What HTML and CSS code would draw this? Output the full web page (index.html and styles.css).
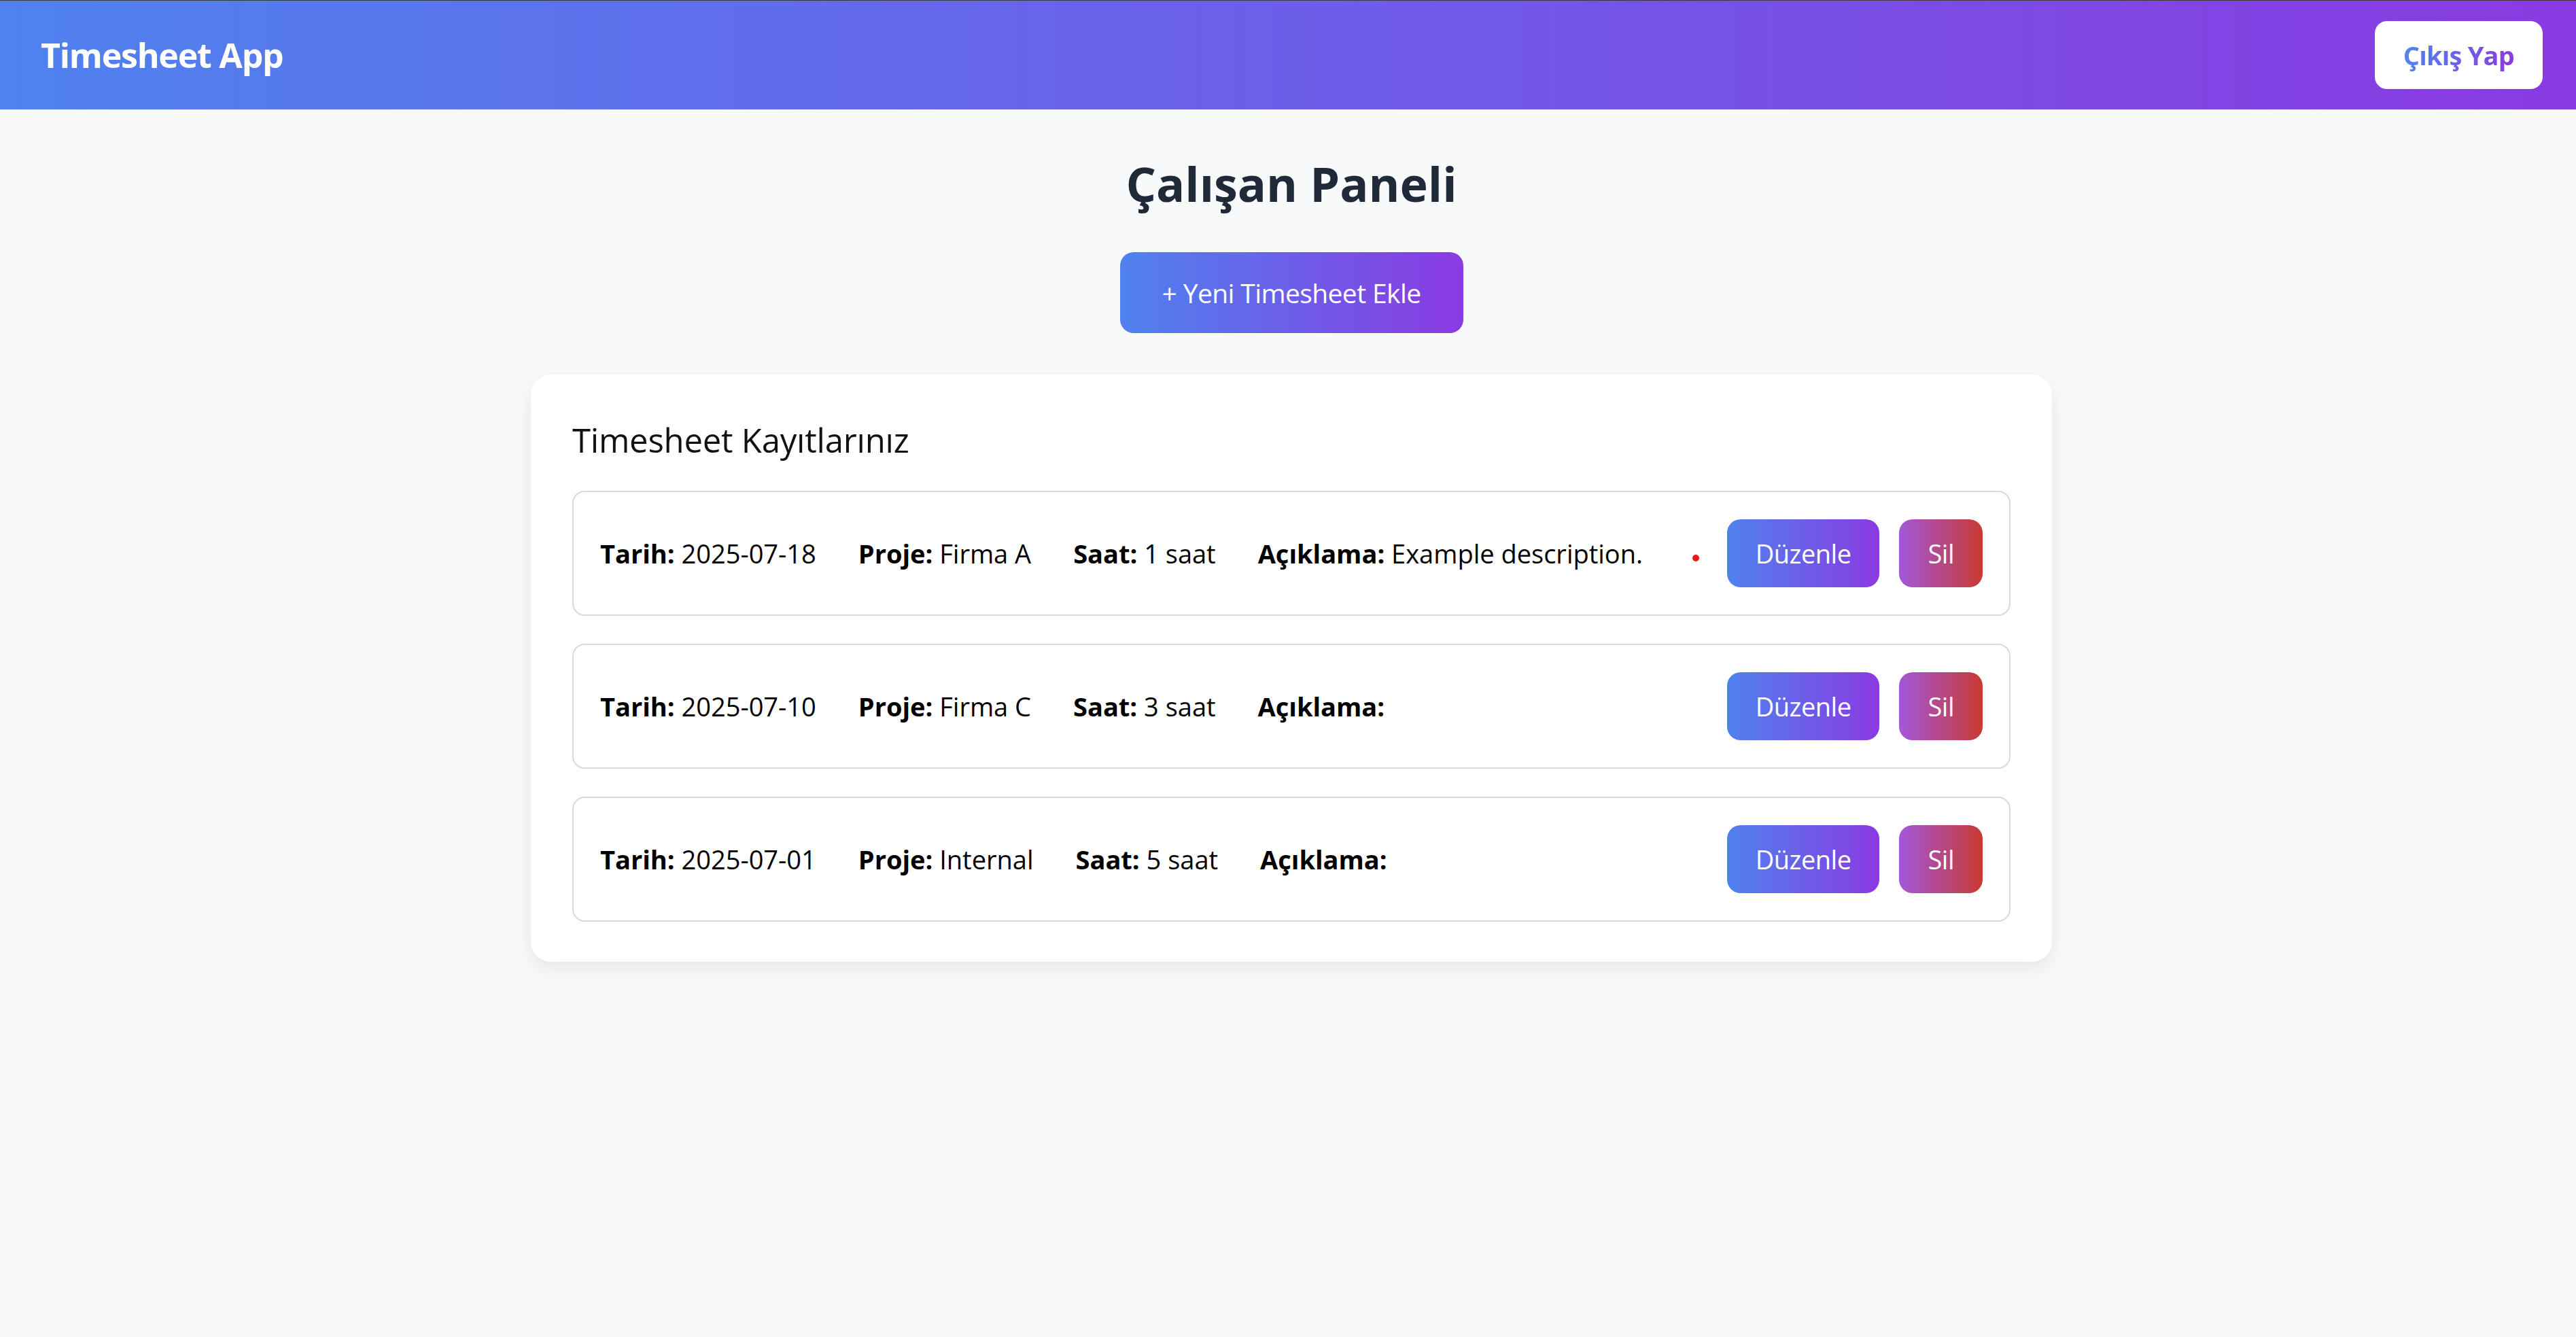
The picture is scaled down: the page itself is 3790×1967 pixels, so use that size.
FILE: index.html
```html
<!DOCTYPE html>
<html lang="tr">
<head>
<meta charset="utf-8">
<title>Timesheet App</title>
<link rel="stylesheet" href="styles.css">
</head>
<body>
<header class="topbar">
  <div class="brand">Timesheet App</div>
  <button class="logout" type="button"><span class="logout-text">Çıkış Yap</span></button>
</header>
<main class="main">
  <h1 class="page-title">Çalışan Paneli</h1>
  <button class="add-btn" type="button">+ Yeni Timesheet Ekle</button>
  <section class="card">
    <h2 class="card-title">Timesheet Kayıtlarınız</h2>
    <ul class="entries">
      <li class="entry">
        <div class="entry-info">
          <span class="field"><strong>Tarih:</strong> 2025-07-18</span>
          <span class="field"><strong>Proje:</strong> Firma A</span>
          <span class="field"><strong>Saat:</strong> 1 saat</span>
          <span class="field"><strong>Açıklama:</strong> Example description.</span>
        </div>
        <div class="entry-actions">
          <span class="dot"></span>
          <button class="btn btn-edit" type="button">Düzenle</button>
          <button class="btn btn-delete" type="button">Sil</button>
        </div>
      </li>
      <li class="entry">
        <div class="entry-info">
          <span class="field"><strong>Tarih:</strong> 2025-07-10</span>
          <span class="field"><strong>Proje:</strong> Firma C</span>
          <span class="field"><strong>Saat:</strong> 3 saat</span>
          <span class="field"><strong>Açıklama:</strong></span>
        </div>
        <div class="entry-actions">
          <button class="btn btn-edit" type="button">Düzenle</button>
          <button class="btn btn-delete" type="button">Sil</button>
        </div>
      </li>
      <li class="entry">
        <div class="entry-info">
          <span class="field"><strong>Tarih:</strong> 2025-07-01</span>
          <span class="field"><strong>Proje:</strong> Internal</span>
          <span class="field"><strong>Saat:</strong> 5 saat</span>
          <span class="field"><strong>Açıklama:</strong></span>
        </div>
        <div class="entry-actions">
          <button class="btn btn-edit" type="button">Düzenle</button>
          <button class="btn btn-delete" type="button">Sil</button>
        </div>
      </li>
    </ul>
  </section>
</main>
</body>
</html>
```

FILE: styles.css
```css
* {
  box-sizing: border-box;
}

body {
  margin: 0;
  background: #f8f9fb;
  font-family: "Open Sans", "Noto Sans", sans-serif;
  color: #000;
}

.topbar {
  height: 161px;
  border-top: 1px solid #3c3c3c;
  background: linear-gradient(90deg, #4f82ee 0%, #8a3ae2 100%);
  display: flex;
  align-items: center;
  justify-content: space-between;
  padding: 0 49px 0 60px;
}

.brand {
  color: #fff;
  font-weight: 700;
  font-size: 50px;
  letter-spacing: -1.2px;
  line-height: 1;
}

.logout {
  height: 100px;
  padding: 0 42px;
  border: none;
  border-radius: 18px;
  background: #fff;
  font-family: inherit;
  font-size: 38px;
  font-weight: 700;
  letter-spacing: -0.8px;
}

.logout-text {
  background: linear-gradient(90deg, #4f86f0 0%, #8a3ae2 100%);
  -webkit-background-clip: text;
  background-clip: text;
  color: transparent;
}

.main {
  display: flex;
  flex-direction: column;
  align-items: center;
  padding: 66px 0 60px 10px;
}

.page-title {
  margin: 0;
  font-size: 70px;
  line-height: 86px;
  font-weight: 700;
  color: #1f2937;
}

.add-btn {
  margin-top: 58px;
  height: 119px;
  padding: 0 62px;
  border: none;
  border-radius: 20px;
  background: linear-gradient(90deg, #4f82ee 0%, #8a3ae2 100%);
  color: #fff;
  font-family: inherit;
  font-size: 39px;
  letter-spacing: -0.6px;
}

.card {
  margin-top: 61px;
  width: 2238px;
  padding: 61px 61px 59px;
  background: #fff;
  border-radius: 30px;
  box-shadow: 0 10px 28px rgba(0, 0, 0, 0.08);
}

.card-title {
  margin: 4px 0 44px;
  font-size: 49px;
  letter-spacing: -0.2px;
  line-height: 62px;
  font-weight: 500;
  color: #111;
}

.entries {
  list-style: none;
  margin: 0;
  padding: 0;
  display: flex;
  flex-direction: column;
  gap: 41px;
}

.entry {
  display: flex;
  align-items: center;
  justify-content: space-between;
  padding: 40px 39px;
  border: 2px solid #d6d9de;
  border-radius: 18px;
}

.entry-info {
  display: flex;
  gap: 62px;
  font-size: 38px;
  letter-spacing: 0;
  color: #000;
}

.entry-info strong {
  font-weight: 700;
}

.entry-actions {
  display: flex;
  align-items: center;
  gap: 29px;
}

.dot {
  width: 10px;
  height: 10px;
  margin: 14px 12px 0 0;
  border-radius: 50%;
  background: #e41c1c;
}

.btn {
  height: 100px;
  padding: 0 42px;
  border: none;
  border-radius: 20px;
  color: #fff;
  font-family: inherit;
  font-size: 38px;
  letter-spacing: -0.5px;
}

.btn-edit {
  background: linear-gradient(90deg, #4f82ee 0%, #8a3ae2 100%);
}

.btn-delete {
  background: linear-gradient(90deg, #a457db 0%, #c83a30 100%);
}
```
